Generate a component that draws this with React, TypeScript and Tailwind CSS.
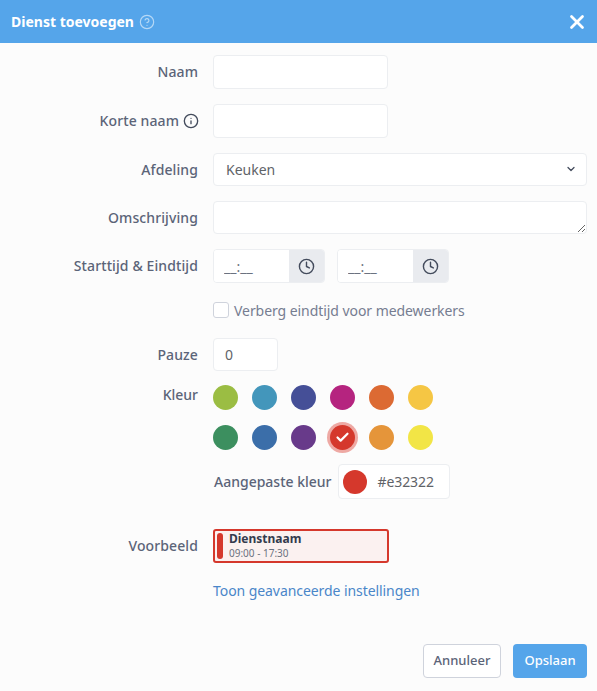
// App.tsx
import { useState } from "react";
import { Check, ChevronDown, CircleHelp, Clock, Info, X } from "lucide-react";

const colors = [
  "bg-[#9bbd43]",
  "bg-[#4396bb]",
  "bg-[#454f97]",
  "bg-[#b5247f]",
  "bg-[#dc6a33]",
  "bg-[#f5c644]",
  "bg-[#3c8f5f]",
  "bg-[#3b6ea9]",
  "bg-[#683a8a]",
  "bg-[#d5382c]",
  "bg-[#e5953a]",
  "bg-[#f2e546]",
];

function Row({ label, children, className }: { label: React.ReactNode; children: React.ReactNode; className: string }) {
  return (
    <div className={`flex ${className}`}>
      <label className="w-[198px] shrink-0 flex justify-end items-center gap-[4px] pb-[1px] text-[14px] tracking-[0.1px] text-[#5b6478] font-medium">
        {label}
      </label>
      <div className="ml-[15px] flex-1 flex items-center">{children}</div>
    </div>
  );
}

function TimeInput() {
  return (
    <div className="flex h-[34px] w-[112px] rounded border border-[#eceef1] bg-white overflow-hidden">
      <input
        readOnly
        value="__:__"
        className="w-[75px] px-[10px] text-[14px] text-[#6b7280] bg-white outline-none"
      />
      <span className="flex-1 bg-[#e9ebef] flex items-center justify-center text-[#434b5c]">
        <Clock size={17} strokeWidth={2} />
      </span>
    </div>
  );
}

export default function App() {
  const [selected, setSelected] = useState(9);

  return (
    <div className="w-[597px] h-[691px] bg-[#fcfcfc] font-['Noto_Sans','Open_Sans',sans-serif] flex flex-col overflow-hidden">
      <header className="h-[43px] shrink-0 bg-[#55a5ea] flex items-center justify-between pl-[11px] pr-[9px] text-white">
        <div className="flex items-center gap-[5px]">
          <h1 className="text-[14px] font-bold">Dienst toevoegen</h1>
          <CircleHelp size={16} strokeWidth={1.75} className="text-[#b5d8f6]" />
        </div>
        <button>
          <X size={22} strokeWidth={3} />
        </button>
      </header>

      <form className="flex-1 flex flex-col pr-[10px]">
        <Row label="Naam" className="h-[34px] mt-[12px]">
          <input className="w-[175px] h-full rounded border border-[#eceef1] bg-white" />
        </Row>
        <Row
          label={
            <>
              Korte naam <Info size={16} strokeWidth={2} className="text-[#434b5c] -mr-[1px]" />
            </>
          }
          className="h-[34px] mt-[15px]"
        >
          <input className="w-[175px] h-full rounded border border-[#eceef1] bg-white" />
        </Row>
        <Row label="Afdeling" className="h-[33px] mt-[15px]">
          <div className="relative w-full h-full">
            <select className="w-full h-full appearance-none rounded border border-[#eceef1] bg-white px-[12px] text-[14px] text-[#5f6368] outline-none">
              <option>Keuken</option>
            </select>
            <ChevronDown
              size={12}
              strokeWidth={2.5}
              className="absolute right-[10px] top-[10px] text-[#434b5c] pointer-events-none"
            />
          </div>
        </Row>
        <Row label="Omschrijving" className="h-[33px] mt-[15px]">
          <textarea className="w-full h-[33px] min-h-[33px] rounded border border-[#eceef1] bg-white" />
        </Row>
        <Row label="Starttijd & Eindtijd" className="h-[34px] mt-[15px]">
          <div className="flex gap-[12px]">
            <TimeInput />
            <TimeInput />
          </div>
        </Row>
        <div className="flex items-center gap-[5px] ml-[213px] mt-[19px] h-[16px]">
          <span className="w-[16px] h-[16px] rounded-[3px] border border-[#cfd3dc] bg-white" />
          <span className="text-[14px] tracking-[-0.06px] text-[#767d91]">Verberg eindtijd voor medewerkers</span>
        </div>
        <Row label="Pauze" className="h-[33px] mt-[20px]">
          <input readOnly value="0" className="w-[65px] h-full rounded border border-[#eceef1] bg-white px-[11px] text-[14px] text-[#5f6368] outline-none" />
        </Row>

        <div className="flex mt-[14px]">
          <label className="w-[198px] shrink-0 text-right text-[14px] text-[#5b6478] font-medium leading-[20px]">
            Kleur
          </label>
          <div className="ml-[15px] grid grid-cols-[repeat(6,25px)] gap-x-[14px] gap-y-[15px]">
            {colors.map((color, i) => (
              <button
                type="button"
                key={color}
                onClick={() => setSelected(i)}
                className={`w-[25px] h-[25px] rounded-full flex items-center justify-center text-white ${color} ${
                  i === selected ? "ring-[3px] ring-[#eea9a4]" : ""
                }`}
              >
                {i === selected && <Check size={15} strokeWidth={3.5} />}
              </button>
            ))}
          </div>
        </div>

        <div className="flex items-center ml-[214px] mt-[14px] h-[35px]">
          <span className="text-[14px] text-[#5b6478] font-medium">Aangepaste kleur</span>
          <div className="ml-[6px] w-[112px] h-full rounded border border-[#eceef1] bg-white flex items-center pl-[4px]">
            <span className="w-[24px] h-[24px] rounded-full bg-[#d5382c]" />
            <span className="ml-[11px] text-[14px] tracking-[-0.1px] text-[#5f6368]">#e32322</span>
          </div>
        </div>

        <Row label="Voorbeeld" className="h-[34px] mt-[30px]">
          <div className="w-[176px] h-[34px] rounded-[3px] border-2 border-[#d5382c] bg-[#fbf1f0] flex p-[2px]">
            <span className="w-[6px] h-full rounded-full bg-[#d5382c] shrink-0" />
            <div className="ml-[6px] flex flex-col justify-center gap-[1px] -mt-[1px]">
              <span className="text-[12px] leading-[14px] font-bold text-[#343b4d]">Dienstnaam</span>
              <span className="text-[10px] leading-[12px] text-[#6b7280]">09:00 - 17:30</span>
            </div>
          </div>
        </Row>

        <a className="ml-[213px] mt-[17px] text-[14px] tracking-[-0.07px] text-[#4a86c9]">Toon geavanceerde instellingen</a>

        <div className="mt-auto mb-[13px] flex justify-end gap-[12px]">
          <button type="button" className="w-[78px] h-[34px] rounded border border-[#cfd3dc] bg-white text-[13px] font-medium text-[#5b6478]">
            Annuleer
          </button>
          <button type="button" className="w-[74px] h-[34px] rounded bg-[#55a5ea] text-[13px] font-medium text-white">
            Opslaan
          </button>
        </div>
      </form>
    </div>
  );
}
